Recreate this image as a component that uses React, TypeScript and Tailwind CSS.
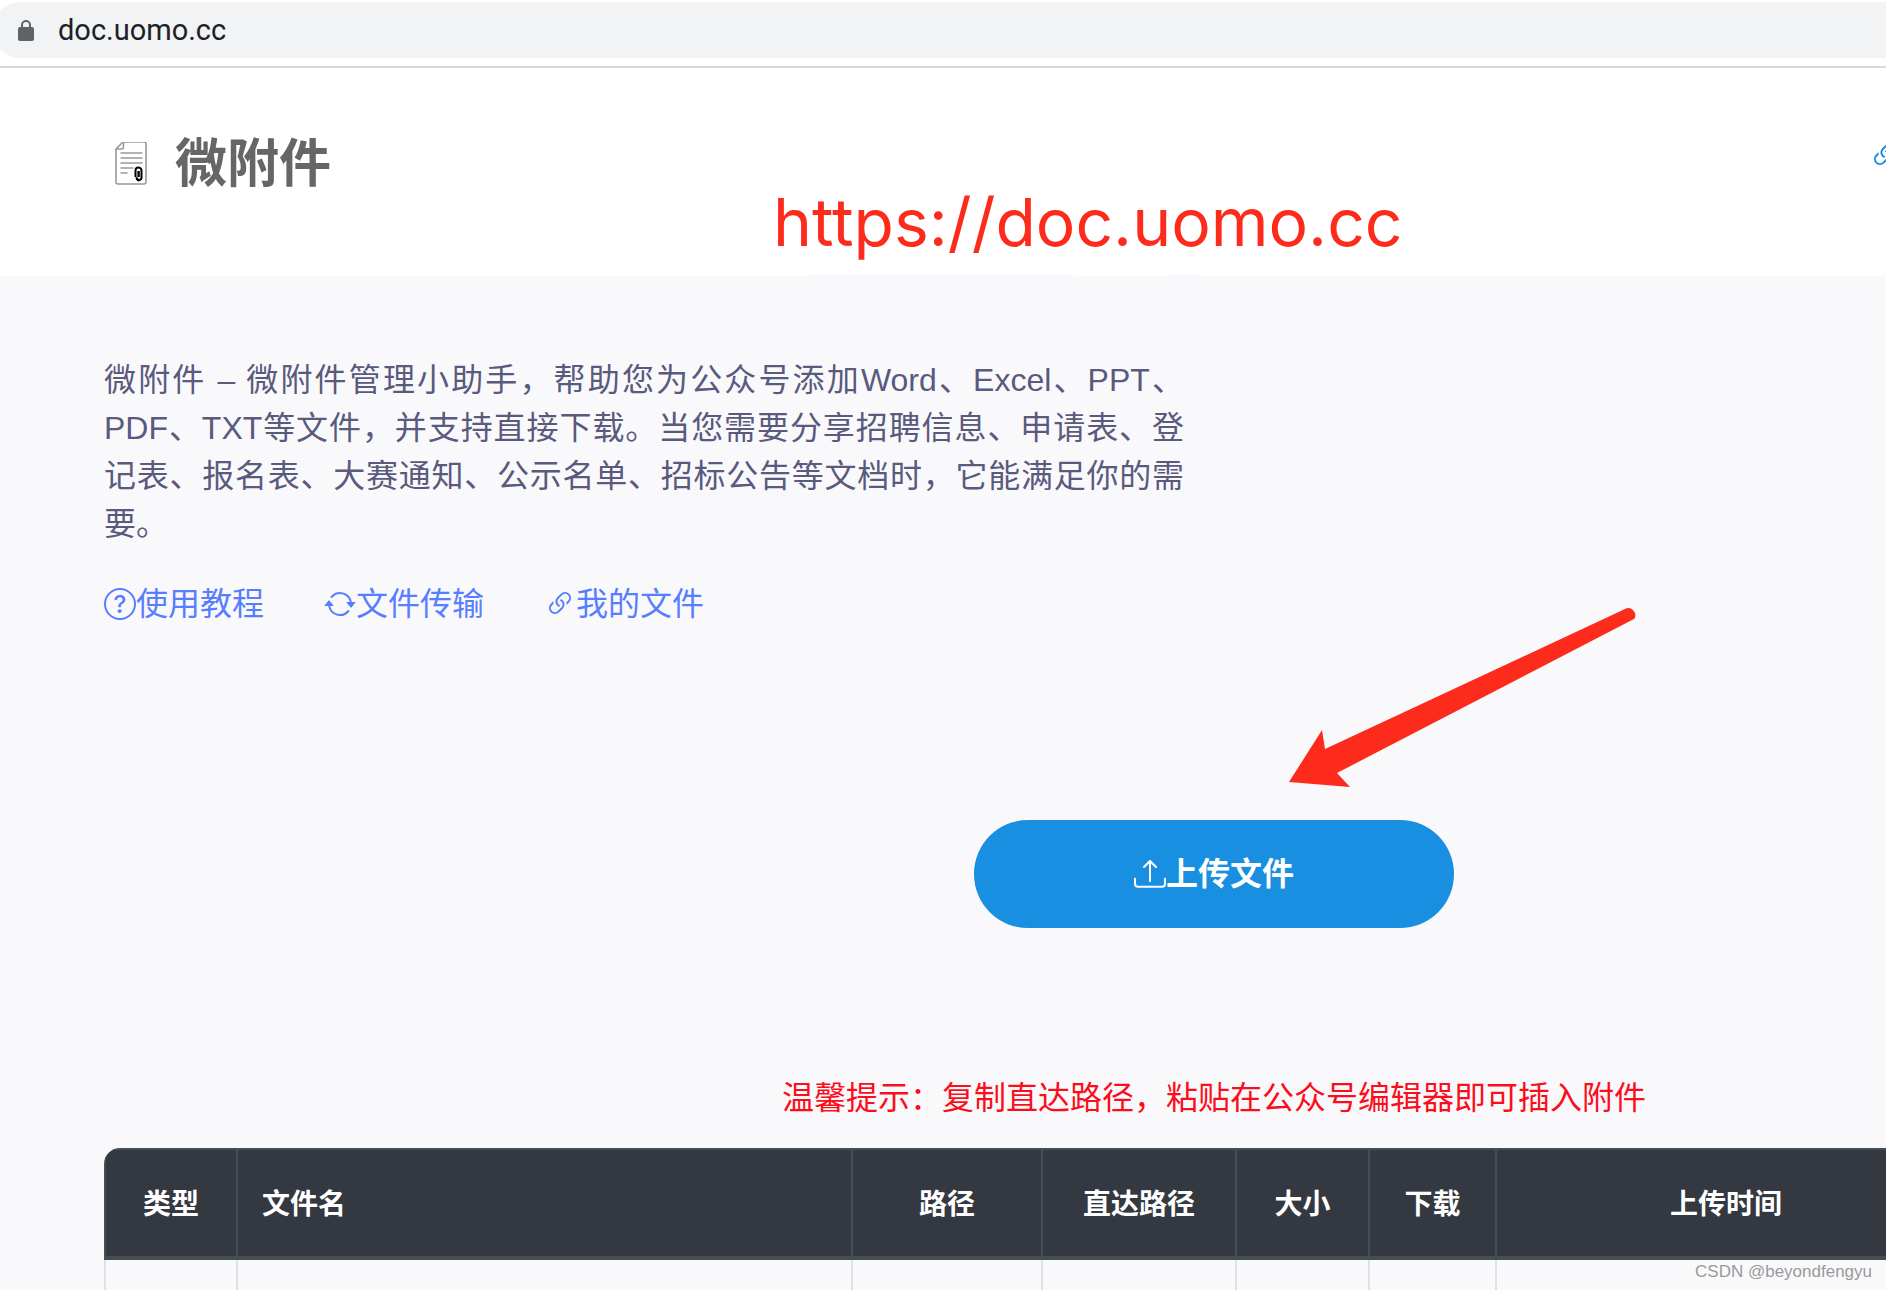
import React from "react";
import { BsArrowRepeat, BsLink45Deg, BsQuestionCircle, BsUpload } from "react-icons/bs";

function LockIcon() {
  return (
    <svg className="h-6 w-5 shrink-0" viewBox="0 0 20 24" aria-hidden="true">
      <rect x="2" y="8" width="16" height="14" rx="2" fill="#5f6368" />
      <path d="M6 10V6a4 4 0 0 1 8 0v4" fill="none" stroke="#5f6368" strokeWidth="2" />
    </svg>
  );
}

function DocIcon() {
  return (
    <svg className="h-11 w-8 shrink-0" viewBox="0 0 32 44" fill="none" aria-hidden="true">
      <path d="M8 0h21a2 2 0 0 1 2 2v38a2 2 0 0 1-2 2H3a2 2 0 0 1-2-2V7z" stroke="#999" strokeWidth="1.6" />
      <path d="M8.500 0v5a2 2 0 0 1-2 2H1" stroke="#999" strokeWidth="1.6" />
      <path d="M5.500 11h22M5.500 16h22M5.500 21h22M5.500 26h13M5.500 31h7" stroke="#999" strokeWidth="1.6" />
      <path d="M20.500 35v-6.500a3 3 0 0 1 6 0v7a2.400 2.400 0 0 1-4.800 0" stroke="#000" strokeWidth="2" />
      <path d="M22 35.500a2 2 0 0 0 2.400 2.600M23.600 35v-6" stroke="#000" strokeWidth="2.400" />
    </svg>
  );
}

const columns = [
  { label: "类型", width: "w-[132px]", align: "text-center" },
  { label: "文件名", width: "w-[615px]", align: "text-left" },
  { label: "路径", width: "w-[190px]", align: "text-center" },
  { label: "直达路径", width: "w-[194px]", align: "text-center" },
  { label: "大小", width: "w-[133px]", align: "text-center" },
  { label: "下载", width: "w-[127px]", align: "text-center" },
  { label: "上传时间", width: "w-[460px]", align: "text-center" },
];

export default function App() {
  return (
    <div className="relative flex h-screen flex-col overflow-hidden bg-[#f9f9fc] font-['Liberation_Sans','Noto_Sans_CJK_SC',sans-serif]">
      <div className="shrink-0 border-b-2 border-[#dadada] bg-white pt-0.5 pb-2">
        <div className="-ml-2 flex h-14 items-center gap-[22px] rounded-l-full bg-[#f1f3f4] pt-0.5 pl-6">
          <LockIcon />
          <span className="font-[Roboto,sans-serif] text-[29px] text-[#202124]">doc.uomo.cc</span>
        </div>
      </div>

      <header className="relative h-52 shrink-0 bg-white">
        <h1 className="flex items-center gap-7 pt-[58px] pl-[115px] text-[52px] leading-[76px] font-bold text-[#666]">
          <DocIcon />
          微附件
        </h1>
        <a href="#files" aria-label="我的文件" className="absolute top-[71px] -right-[15px] text-[#188fe0]">
          <BsLink45Deg className="size-8" />
        </a>
        <p className="absolute top-28 left-[773px] font-[Inter,sans-serif] text-[66px] leading-[84px] text-[#fc2b1c]">https://doc.uomo.cc</p>
        <span className="absolute bottom-0 left-[810px] h-0.5 w-[266px] bg-[#f9f9ff]" />
        <span className="absolute bottom-0 left-[1167px] h-0.5 w-8 bg-[#f9f9ff]" />
      </header>

      <main className="w-[2220px] shrink-0 pt-20 pl-26">
        <p className="w-[1080px] text-justify text-[32px] leading-12 text-[#595a7d]">
          微附件 – 微附件管理小助手，帮助您为公众号添加Word、Excel、PPT、PDF、TXT等文件，并支持直接下载。当您需要分享招聘信息、申请表、登记表、报名表、大赛通知、公示名单、招标公告等文档时，它能满足你的需要。
        </p>
        <nav className="mt-8 flex gap-15 text-[32px] leading-12 text-[#587eff]">
          <a href="#guide" className="flex items-center"><BsQuestionCircle className="size-8" />使用教程</a>
          <a href="#transfer" className="flex items-center"><BsArrowRepeat className="size-8" />文件传输</a>
          <a href="#files" className="flex items-center"><BsLink45Deg className="size-8" />我的文件</a>
        </nav>

        <div className="relative w-[2220px] pt-[192px]">
          <button type="button" className="ml-[870px] flex h-27 w-[480px] items-center justify-center rounded-full bg-[#188fe0] text-[32px] font-bold text-white">
            <BsUpload className="size-8" />上传文件
          </button>
          <svg className="absolute -top-5 left-[1180px] h-[186px] w-[356px]" viewBox="0 0 356 186" aria-hidden="true">
            <path d="M5 174L38 122L41 141L341 1Q347-2 351 5Q352 9 350 11L53 165L66 179Z" fill="#fc2b1c" />
          </svg>
        </div>
        <p className="mt-[146px] ml-[678px] text-[32px] leading-12 text-[#fc0d1b]">温馨提示：复制直达路径，粘贴在公众号编辑器即可插入附件</p>

        <div className="mt-[26px] w-[1852px] overflow-hidden rounded-tl-2xl">
          <table className="w-full table-fixed border-collapse text-[28px]">
            <thead>
              <tr className="h-[109px] bg-[#343840] text-white">
                {columns.map((c) => (
                  <th key={c.label} className={`${c.width} ${c.align} border-2 border-b-4 border-[#454d55] px-6 pt-1 font-bold`}>{c.label}</th>
                ))}
              </tr>
            </thead>
            <tbody>
              <tr className="h-28">
                {columns.map((c) => (
                  <td key={c.label} className="border-2 border-[#dee2e6]" />
                ))}
              </tr>
            </tbody>
          </table>
        </div>
      </main>
      <span className="absolute right-3.5 bottom-1.5 text-[17px] text-[#999]">CSDN @beyondfengyu</span>
    </div>
  );
}
